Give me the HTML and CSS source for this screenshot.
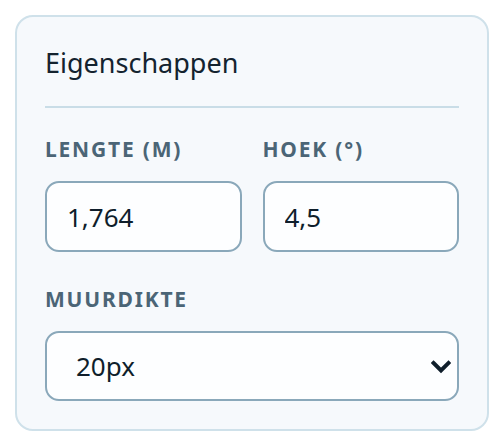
FILE: index.html
```html
<!DOCTYPE html>
<html lang="nl">
<head>
<meta charset="utf-8">
<title>Eigenschappen</title>
<link rel="stylesheet" href="styles.css">
</head>
<body>
<div class="card">
  <h2 class="title">Eigenschappen</h2>
  <hr class="divider">
  <div class="row">
    <div class="field">
      <label class="label" for="lengte">Lengte (m)</label>
      <input class="input" id="lengte" type="text" value="1,764">
    </div>
    <div class="field">
      <label class="label" for="hoek">Hoek (°)</label>
      <input class="input" id="hoek" type="text" value="4,5">
    </div>
  </div>
  <div class="field field-wide">
    <label class="label" for="muurdikte">Muurdikte</label>
    <div class="select-wrap">
      <select class="select" id="muurdikte">
        <option>20px</option>
      </select>
      <svg class="chevron" width="20" height="14" viewBox="0 0 20 14" aria-hidden="true">
        <polyline points="2.5,3 10,10.5 17.5,3" fill="none" stroke="#0f1e2b" stroke-width="4" stroke-linecap="square" stroke-linejoin="miter"/>
      </svg>
    </div>
  </div>
</div>
</body>
</html>
```

FILE: styles.css
```css
html, body {
  margin: 0;
  padding: 0;
  background: #ffffff;
}

body {
  padding: 15px;
  font-family: "Noto Sans", "Open Sans", sans-serif;
  color: #14232f;
}

.card {
  box-sizing: border-box;
  width: 474px;
  height: 416px;
  border: 2px solid #cfe1ea;
  border-radius: 18px;
  background: #f6f9fc;
  padding: 30px 28px 28px 28px;
}

.title {
  margin: 0;
  font-size: 27px;
  font-weight: 400;
  line-height: 32px;
  color: #14232f;
}

.divider {
  margin: 27px 0 0 0;
  border: 0;
  height: 2px;
  background: #c9dde7;
}

.row {
  display: grid;
  grid-template-columns: 1fr 1fr;
  column-gap: 21px;
  margin-top: 29px;
}

.field {
  display: flex;
  flex-direction: column;
}

.field-wide {
  margin-top: 35px;
}

.label {
  font-size: 21px;
  font-weight: 700;
  line-height: 24px;
  letter-spacing: 1.8px;
  text-transform: uppercase;
  color: #4b6576;
  margin-bottom: 20px;
}

.input,
.select {
  box-sizing: border-box;
  width: 100%;
  height: 71px;
  border: 2px solid #8aa8ba;
  border-radius: 14px;
  background: #fdfeff;
  font-family: inherit;
  font-size: 26px;
  color: #0f1e2b;
  outline: none;
}

.input {
  padding: 0 20px;
}

.select-wrap {
  position: relative;
}

.select {
  height: 70px;
  appearance: none;
  -webkit-appearance: none;
  padding: 0 40px 0 29px;
}

.chevron {
  position: absolute;
  right: 8px;
  top: 29px;
  pointer-events: none;
}
```
